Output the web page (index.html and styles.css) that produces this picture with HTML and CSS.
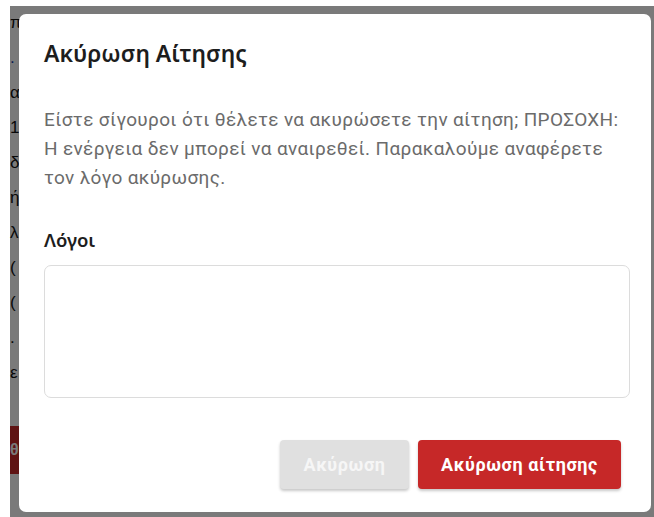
FILE: index.html
```html
<!DOCTYPE html>
<html lang="el">
<head>
<meta charset="utf-8">
<title>Ακύρωση Αίτησης</title>
<link rel="stylesheet" href="styles.css">
</head>
<body>
  <main class="page">
    <span class="page-line">π</span>
    <span class="page-line link">.</span>
    <span class="page-line">α</span>
    <span class="page-line">1</span>
    <span class="page-line">δ</span>
    <span class="page-line">ή</span>
    <span class="page-line">λ</span>
    <span class="page-line">(</span>
    <span class="page-line">(</span>
    <span class="page-line">.</span>
    <span class="page-line">ε</span>
    <span class="page-btn">θ</span>
  </main>

  <div class="backdrop"></div>

  <section class="dialog" role="dialog" aria-labelledby="dlg-title">
    <h2 class="dialog-title" id="dlg-title">Ακύρωση Αίτησης</h2>
    <p class="dialog-text">Είστε σίγουροι ότι θέλετε να ακυρώσετε την αίτηση; ΠΡΟΣΟΧΗ: Η ενέργεια δεν μπορεί να αναιρεθεί. Παρακαλούμε αναφέρετε τον λόγο ακύρωσης.</p>
    <label class="field-label" for="reasons">Λόγοι</label>
    <textarea class="field-input" id="reasons"></textarea>
    <div class="dialog-actions">
      <button class="btn btn-muted" disabled>Ακύρωση</button>
      <button class="btn btn-danger">Ακύρωση αίτησης</button>
    </div>
  </section>
</body>
</html>
```

FILE: styles.css
```css
* { box-sizing: border-box; }

html, body {
  margin: 0;
  height: 100%;
  background: #fff;
  overflow: hidden;
}

/* page content sitting behind the modal (only its left edge shows) */
.page {
  width: 19px;
  padding: 14px 0 0 10px;
  display: flex;
  flex-direction: column;
  align-items: flex-start;
  gap: 18px;
  font-family: "Liberation Sans", Arial, sans-serif;
  font-size: 17px;
  line-height: 17px;
  color: #111;
}
.page-line { display: block; }
.link { color: #1a3fb0; }
.page-btn {
  margin-top: 27px;
  width: 9px;
  height: 48px;
  background: #c62828;
  color: #fff;
  font-weight: bold;
  font-size: 16px;
  line-height: 48px;
}

.backdrop {
  position: fixed;
  left: 10px;
  top: 6px;
  right: 0;
  bottom: 0;
  background: rgba(0, 0, 0, 0.52);
}

.dialog {
  position: absolute;
  left: 19px;
  top: 14px;
  width: 632px;
  height: 498px;
  background: #fff;
  border-radius: 7px;
  padding: 24px 21px 0 25px;
  display: flex;
  flex-direction: column;
}

.dialog-title {
  margin: 0;
  font-family: "Noto Sans", "Open Sans", sans-serif;
  font-weight: 600;
  font-size: 23px;
  line-height: 30px;
  color: #1d1d1d;
}

.dialog-text {
  margin: 37px 0 0;
  padding-right: 8px;
  font-family: Roboto, "Noto Sans", sans-serif;
  font-size: 19px;
  letter-spacing: 0.35px;
  line-height: 29px;
  color: #6b6b6b;
}

.field-label {
  margin-top: 36px;
  font-family: "Noto Sans", "Open Sans", sans-serif;
  font-weight: 600;
  font-size: 18.5px;
  line-height: 24px;
  color: #1d1d1d;
}

.field-input {
  margin-top: 13px;
  width: 586px;
  height: 133px;
  border: 1px solid #dcdcdc;
  border-radius: 7px;
  resize: none;
  outline: none;
  font-family: Roboto, sans-serif;
}

.dialog-actions {
  margin-top: 42px;
  padding-right: 9px;
  display: flex;
  justify-content: flex-end;
  gap: 9px;
}

.btn {
  height: 49px;
  border: 0;
  border-radius: 4px;
  font-family: Roboto, "Noto Sans", sans-serif;
  font-weight: 700;
  font-size: 18px;
  letter-spacing: 0.6px;
  box-shadow: 0 2px 3px rgba(0, 0, 0, 0.22);
}
.btn-muted {
  width: 129px;
  background: #e0e0e0;
  color: #f6f6f6;
}
.btn-danger {
  width: 203px;
  background: #c62828;
  color: #fff;
}
```
